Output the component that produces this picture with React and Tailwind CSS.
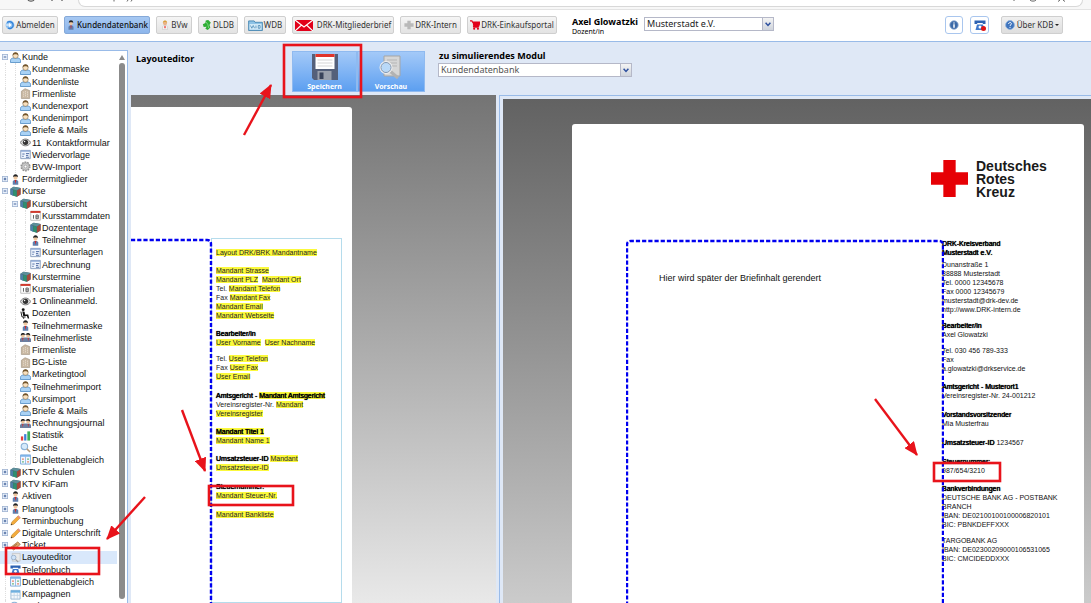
import React, { useState } from 'react';
import clsx from 'clsx';

const NAV_BUTTONS = [
  { key: 'logout', icon: 'power', label: 'Abmelden', width: 'w-[56px]' },
  { key: 'kdb', icon: 'person', label: 'Kundendatenbank', width: 'w-[86px]', active: true },
  { key: 'bvw', icon: 'nurse', label: 'BVw', width: 'w-[36px]' },
  { key: 'dldb', icon: 'leaf', label: 'DLDB', width: 'w-[40px]' },
  { key: 'wdb', icon: 'folder', label: 'WDB', width: 'w-[42px]' },
  { key: 'brief', icon: 'mail', label: 'DRK-Mitgliederbrief', width: 'w-[102px]', gap: 'gap-1' },
  { key: 'intern', icon: 'plus', label: 'DRK-Intern', width: 'w-[61px]' },
  { key: 'shop', icon: 'cart', label: 'DRK-Einkaufsportal', width: 'w-[90px]' },
];

// depth = indent level, open: true = minus box, false = plus box, undefined = leaf
const TREE = [
  { depth: 0, icon: 'user', label: 'Kunde', open: true },
  { depth: 1, icon: 'user', label: 'Kundenmaske' },
  { depth: 1, icon: 'user', label: 'Kundenliste' },
  { depth: 1, icon: 'building', label: 'Firmenliste' },
  { depth: 1, icon: 'user', label: 'Kundenexport' },
  { depth: 1, icon: 'user', label: 'Kundenimport' },
  { depth: 1, icon: 'user', label: 'Briefe & Mails' },
  { depth: 1, icon: 'eye', label: '11  Kontaktformular' },
  { depth: 1, icon: 'form', label: 'Wiedervorlage' },
  { depth: 1, icon: 'gear', label: 'BVW-Import' },
  { depth: 0, icon: 'person', label: 'Fördermitglieder', open: false },
  { depth: 0, icon: 'cube', label: 'Kurse', open: true },
  { depth: 1, icon: 'cube', label: 'Kursübersicht', open: true },
  { depth: 2, icon: 'calendar', label: 'Kursstammdaten' },
  { depth: 2, icon: 'cube', label: 'Dozententage' },
  { depth: 2, icon: 'person', label: 'Teilnehmer' },
  { depth: 2, icon: 'form', label: 'Kursunterlagen' },
  { depth: 2, icon: 'form', label: 'Abrechnung' },
  { depth: 1, icon: 'cube', label: 'Kurstermine' },
  { depth: 1, icon: 'calendar', label: 'Kursmaterialien' },
  { depth: 1, icon: 'eye', label: '1 Onlineanmeld.' },
  { depth: 1, icon: 'teacher', label: 'Dozenten' },
  { depth: 1, icon: 'person', label: 'Teilnehmermaske' },
  { depth: 1, icon: 'people', label: 'Teilnehmerliste' },
  { depth: 1, icon: 'building', label: 'Firmenliste' },
  { depth: 1, icon: 'building', label: 'BG-Liste' },
  { depth: 1, icon: 'user', label: 'Marketingtool' },
  { depth: 1, icon: 'user', label: 'Teilnehmerimport' },
  { depth: 1, icon: 'user', label: 'Kursimport' },
  { depth: 1, icon: 'user', label: 'Briefe & Mails' },
  { depth: 1, icon: 'people', label: 'Rechnungsjournal' },
  { depth: 1, icon: 'chart', label: 'Statistik' },
  { depth: 1, icon: 'search', label: 'Suche' },
  { depth: 1, icon: 'compare', label: 'Dublettenabgleich' },
  { depth: 0, icon: 'cube', label: 'KTV Schulen', open: false },
  { depth: 0, icon: 'cube', label: 'KTV KiFam', open: false },
  { depth: 0, icon: 'person', label: 'Aktiven', open: false },
  { depth: 0, icon: 'person', label: 'Planungtools', open: false },
  { depth: 0, icon: 'pencil', label: 'Terminbuchung', open: false },
  { depth: 0, icon: 'pencil', label: 'Digitale Unterschrift', open: false },
  { depth: 0, icon: 'ticket', label: 'Ticket', open: false },
  { depth: 0, icon: 'layout', label: 'Layouteditor' },
  { depth: 0, icon: 'phone', label: 'Telefonbuch' },
  { depth: 0, icon: 'compare', label: 'Dublettenabgleich' },
  { depth: 0, icon: 'window', label: 'Kampagnen' },
  { depth: 0, icon: 'search', label: 'Suche' },
];

// all glyphs share a 12x12 grid
const GLYPHS = {
  user: (
    <>
      <path d="M.5 11.500V9.200c0-1.600 1.600-2.600 3-2.600h5c1.400 0 3 1 3 2.600v2.300z" fill="#a9d2f5" stroke="#4f8ac4" strokeWidth=".9" />
      <circle cx="6" cy="4" r="2.900" fill="#f9e0bd" stroke="#77664a" strokeWidth=".6" />
      <path d="M2.900 4C2.800 1.500 4.300.4 6 .4S9.200 1.500 9.100 4C8.200 2.600 7 2.500 6 2.500S3.800 2.600 2.900 4z" fill="#73552c" />
    </>
  ),
  person: (
    <>
      <path d="M3 11.800V8l1.500-1.500h3L9 8v3.800z" fill="#5f7fae" />
      <path d="M5.200 6.500h1.600L6 11z" fill="#d22" />
      <circle cx="6" cy="4" r="2.200" fill="#f0c8a0" />
      <path d="M3.400 3.600C3.400 1 4.500.2 6 .2s2.700.8 2.700 3.400L7.500 2.800h-3z" fill="#222" />
    </>
  ),
  people: (
    <>
      <path d="M0 11V7.500L1.500 6h9L12 7.500V11z" fill="#6d7fa0" />
      <path d="M2.500 6.500h1.200L3 10zM8.400 6.500h1.200L9 10z" fill="#d22" />
      <circle cx="3.200" cy="4.200" r="2" fill="#edc49c" />
      <circle cx="8.800" cy="4.200" r="2" fill="#edc49c" />
      <path d="M.8 4C.8 1.500 2 1 3.200 1s2.300.5 2.800 2C6.500 1.500 7.600 1 8.800 1s2.400.5 2.400 3L9.500 3h-7z" fill="#222" />
    </>
  ),
  building: (
    <>
      <path d="M1.500 11.500V3.500L5.500.8l5 2v8.700z" fill="#c9b8a2" stroke="#a39483" strokeWidth=".7" />
      <path d="M4 4v6M6 3.500V10M8.200 4v6" stroke="#efe6da" strokeWidth=".9" strokeDasharray="1.200 1" />
    </>
  ),
  eye: (
    <>
      <path d="M.3 6C2 3.200 4 2.200 6 2.200S10 3.200 11.700 6C10 8.800 8 9.600 6 9.600S2 8.800.3 6z" fill="#ddd" stroke="#666" strokeWidth=".9" />
      <circle cx="6" cy="5.800" r="2.900" fill="#333" />
      <circle cx="5" cy="4.800" r=".8" fill="#fff" />
    </>
  ),
  form: (
    <>
      <path d="M.8 1.500h10.400v9H.8z" fill="#eef4fd" stroke="#7b92b5" strokeWidth=".9" />
      <path d="M.8 1.500h10.400v1.500H.8z" fill="#8fabd6" />
      <path d="M2.500 5.500h2.500M2.500 8h1.500M6.500 5h3.500M6.500 7h2.500M6.500 9h3.500" stroke="#4766a0" strokeWidth="1" />
    </>
  ),
  gear: (
    <>
      <circle cx="6" cy="6" r="4.800" fill="#c9c9c9" stroke="#8d8d8d" strokeWidth="1.400" strokeDasharray="1.800 1.200" />
      <circle cx="6" cy="6" r="3.800" fill="#ccc" stroke="#999" strokeWidth=".6" />
      <circle cx="6" cy="6" r="1.500" fill="#fff" stroke="#888" strokeWidth=".6" />
    </>
  ),
  cube: (
    <>
      <path d="M.5 3 4 .8l7.500 1.400v7L7.500 11.600.5 9.400z" fill="#456" />
      <path d="M.5 3l3 1v7L.5 9.400z" fill="#4d7fa8" />
      <path d="M3.500 4l4 1v6.600l-4-1z" fill="#2f8f70" />
      <path d="M7.500 5l4-2.800v7l-4 2.400z" fill="#a5483c" />
      <path d="M.5 3 4 .8l7.500 1.400-4 2.800z" fill="#5c8f9a" />
    </>
  ),
  calendar: (
    <>
      <path d="M.8 1.500h10.400v9.700H.8z" fill="#fff" stroke="#aaa" strokeWidth=".8" />
      <path d="M.5 1h11v2.200H.5z" fill="#cf3a2d" />
      <path d="M3.800 5.500v4M6.500 5.500h2.500v4H6.500zM6.500 7.500h2.500" fill="none" stroke="#555" strokeWidth="1" />
    </>
  ),
  teacher: (
    <>
      <circle cx="3.500" cy="1.800" r="1.600" fill="#111" />
      <path d="M2.500 3.500l2.500.5.500 3h3.500l1 4.500H8.500L7.500 8.800H3.500z" fill="#111" />
      <path d="M1 4l1.200 5.800h4M4 10v1.800" fill="none" stroke="#111" strokeWidth="1" />
    </>
  ),
  chart: (
    <>
      <path d="M1 7h2.500v4.500H1z" fill="#e33f3f" />
      <path d="M4.500 4.500H7v7H4.500z" fill="#3f7fd9" />
      <path d="M8 1.500h3v10H8z" fill="#3cae5c" />
    </>
  ),
  search: (
    <>
      <circle cx="4.800" cy="4.800" r="3.500" fill="#d6ebfb" stroke="#8db4d8" strokeWidth="1.200" />
      <path d="M7.500 7.500l3.500 3.500" stroke="#b59a78" strokeWidth="1.600" />
    </>
  ),
  compare: (
    <>
      <path d="M.6 1h10.800v10H.6z" fill="#f3f8ff" stroke="#6da1d6" strokeWidth=".9" />
      <path d="M.6 1h10.800v2H.6z" fill="#7db3e8" />
      <path d="M6 3v8" stroke="#6da1d6" strokeWidth=".7" />
      <path d="M2.500 5.500H4M8 8.500h1.500" stroke="#e0572b" strokeWidth="1.400" />
      <path d="M2.500 8.500H4M8 5.500h1.500" stroke="#3d9d4a" strokeWidth="1.400" />
    </>
  ),
  pencil: (
    <>
      <path d="M1 11l1-3.500L9 .8 11.300 3l-7 7z" fill="#f3ab3c" stroke="#b67818" strokeWidth=".5" />
      <path d="M8 1.800L9.200.7l2.200 2.200-1.200 1.200z" fill="#e88b8b" />
      <path d="M1 11l.5-1.800 1.300 1.300z" fill="#333" />
    </>
  ),
  ticket: (
    <>
      <path d="M.8 8L8.500 2l2.800 2.800L4 11z" fill="#d9a46b" stroke="#9a6a38" strokeWidth=".7" />
      <path d="M3.500 7.500l4-3" stroke="#8a5b2c" strokeWidth=".8" />
    </>
  ),
  layout: (
    <>
      <path d="M2.500 1.500h8.500v8.500H2.500z" fill="#e9e9e9" stroke="#bbb" strokeWidth=".7" />
      <circle cx="4" cy="6" r="2.500" fill="#cfe3f8" stroke="#8aa5c4" strokeWidth=".8" />
      <path d="M6 8l3 3" stroke="#999" strokeWidth="1.200" />
    </>
  ),
  phone: (
    <>
      <path d="M.5 1.500h11v3.500H8.800V4H3.200v1H.5z" fill="#2d62b3" />
      <path d="M3 5.500h6l1.500 5.500h-9z" fill="#3f78cc" />
      <circle cx="6" cy="8" r="1.500" fill="#fff" />
    </>
  ),
  window: (
    <>
      <path d="M1 1.500h10v9.500H1z" fill="#f4f8fc" stroke="#8fb0cf" strokeWidth=".9" />
      <path d="M1 1.500h10V4H1z" fill="#6fb0df" />
      <path d="M1 7h10M4.500 4v7M8 4v7" stroke="#bcd0e2" strokeWidth=".8" />
    </>
  ),
  power: (
    <>
      <circle cx="6" cy="6" r="5.300" fill="#8cc0f2" />
      <path d="M2.500 3C5 .8 9.800 2 9.800 6S6 11 3.500 9.500" fill="none" stroke="#2f7fd6" strokeWidth="1.500" />
      <path d="M1.500 6h5M4.800 4l2.200 2-2.200 2" fill="none" stroke="#fff" strokeWidth="1.300" />
    </>
  ),
  nurse: (
    <>
      <path d="M3 11.500V8l1.500-1.500h3L9 8v3.500z" fill="#f2f2f2" stroke="#bbb" strokeWidth=".5" />
      <circle cx="6" cy="4" r="2.400" fill="#e9b487" />
      <path d="M3.400 3.500C3.400 1 5 .5 6 .5s2.600.5 2.600 3L7 2.500H5z" fill="#d9a03c" />
      <path d="M6 7v3M4.800 8.500h2.400" stroke="#e33" strokeWidth=".9" />
    </>
  ),
  leaf: (
    <>
      <path d="M4.500.5L7.500 0 10.500 3 9 6l1 3-3 3-3-1.500L5.500 8 2 8.500 1 5l3-1.500z" fill="#2fae35" />
      <path d="M5 2.500l2 3 1 4" stroke="#8be08d" strokeWidth="1" fill="none" />
    </>
  ),
  plus: <path d="M4 1h4v3h3.500v4H8v3.200H4V8H.5V4H4z" fill="#b9b9b9" />,
  cart: (
    <>
      <path d="M0 1h2.300l.7 1.500h9L10.500 7.500H4.200l.3 1H10.500" fill="none" stroke="#e2001a" strokeWidth="1.300" />
      <path d="M3 2.500h9L10.500 7.500H4z" fill="#e2001a" />
      <circle cx="5" cy="10.500" r="1.300" fill="#e2001a" />
      <circle cx="9.500" cy="10.500" r="1.300" fill="#e2001a" />
    </>
  ),
  help: (
    <>
      <circle cx="6" cy="6" r="5.300" fill="#3f74bd" stroke="#8fb3e0" strokeWidth="1" />
      <path d="M4.300 4.800c0-2.300 3.400-2.300 3.400-.3 0 1.300-1.700 1.300-1.700 2.600M6 8.300v1.200" fill="none" stroke="#fff" strokeWidth="1.200" />
    </>
  ),
  info: (
    <>
      <circle cx="6" cy="6" r="5" fill="#3c6aa8" stroke="#87a5cf" strokeWidth="1" />
      <path d="M6 3v1.300M6 5.200v4" stroke="#fff" strokeWidth="1.800" />
    </>
  ),
};

function Glyph({ name, className = 'w-[10px] h-[10px]' }) {
  if (name === 'mail') {
    return (
      <svg viewBox="0 0 18 11" className="w-[18px] h-[11px] shrink-0">
        <path d="M0 0h18v11H0z" fill="#e2001a" />
        <path d="M0 0l9 7 9-7M0 11l6.500-6M18 11l-6.500-6" fill="none" stroke="#fff" strokeWidth="1.200" />
      </svg>
    );
  }
  if (name === 'folder') {
    return (
      <svg viewBox="0 0 16 12" className="w-[15px] h-[11px] shrink-0">
        <path d="M.5 1h6l1 1.500h8v9H.5z" fill="#8fc3e6" stroke="#3c7fae" strokeWidth=".9" />
        <path d="M1.500 4.500h13v6h-13z" fill="#d8edf9" />
        <path d="M2.500 6l1.500 3 1.500-3 1.500 3M8.500 6v3M11 6h2v3h-2z" fill="none" stroke="#3c7fae" strokeWidth=".8" />
      </svg>
    );
  }
  return (
    <svg viewBox="0 0 12 12" className={clsx('shrink-0', className)}>
      {GLYPHS[name]}
    </svg>
  );
}

function BrowserEdge() {
  return (
    <div className="h-[10px] shrink-0 bg-[#f7f7f7] border-b border-[#e3e3e3] flex items-start pl-[24px] pr-[8px]">
      <svg viewBox="0 0 54 4" className="w-[54px] h-[4px] shrink-0">
        <path d="M4 0c1 1.500 5 1.500 6 0M28 0v1M38 0v1" fill="none" stroke="#555" strokeWidth="1.200" />
      </svg>
      <div className="flex-1 h-[7px] bg-white border-b border-x border-[#d8d8d8] rounded-b-[7px] flex justify-between items-start pl-8 pr-3">
        <svg viewBox="0 0 30 3" className="w-[30px] h-[3px]">
          <path d="M3 0v1.500M16 1.500l1-1.500M20 1.500l1-1.500" stroke="#666" />
        </svg>
        <svg viewBox="0 0 60 3" className="w-[60px] h-[3px]">
          <path d="M4 0v1M20 0c1 1.500 5 1.500 6 0M48 1.500L50 0M53 0l2 1.500" fill="none" stroke="#666" />
        </svg>
      </div>
    </div>
  );
}

function Combo({ id, label, options, className }) {
  return (
    <div className={clsx('flex h-[14px] border border-[#b5b8c8] bg-white', className)}>
      <select
        id={id}
        aria-label={label}
        className="flex-1 min-w-0 appearance-none bg-transparent pl-[2px] outline-none leading-[12px]"
      >
        {options.map((o) => (
          <option key={o}>{o}</option>
        ))}
      </select>
      <span className="w-[11px] border-l border-[#b5b8c8] bg-gradient-to-b from-[#f4f4f4] to-[#cfd4dc] flex items-center justify-center pointer-events-none">
        <svg viewBox="0 0 6 5" className="w-[6px] h-[5px]">
          <path d="M.6.8L3 3.400 5.400.8" fill="none" stroke="#2c4f9e" strokeWidth="1.500" />
        </svg>
      </span>
    </div>
  );
}

function TopBar() {
  return (
    <header className="h-[31px] shrink-0 bg-white flex items-start pt-[6px] pl-[2px] pr-[28px] font-['Noto_Sans','Open_Sans',sans-serif] text-[8px] leading-[10px] text-[#333]">
      <nav className="flex gap-[6px]">
        {NAV_BUTTONS.map((b) => (
          <button
            key={b.key}
            className={clsx(
              'h-[18px] border rounded-[2px] flex items-center justify-center whitespace-nowrap',
              b.width,
              b.gap || 'gap-px',
              b.active
                ? 'bg-gradient-to-b from-[#a6c8f2] to-[#8db6ec] border-[#86a9d8] text-[#111] font-medium'
                : 'bg-gradient-to-b from-[#f5f5f5] to-[#e3e3e3] border-[#cfcfcf]'
            )}
          >
            <Glyph name={b.icon} />
            {b.label}
          </button>
        ))}
      </nav>
      <div className="ml-[15px] w-[72px] text-black">
        <div className="text-[9px] leading-[12px] font-bold whitespace-nowrap">Axel Glowatzki</div>
        <div className="text-[7px] leading-[8px]">Dozent/in</div>
      </div>
      <Combo
        id="mandant"
        label="Mandant"
        options={['Musterstadt e.V.']}
        className="mt-px w-[130px] text-[9px] text-[#222]"
      />
      <div className="ml-auto flex">
        <button aria-label="Info" className="w-[18px] h-[18px] border border-[#a9c6ee] rounded-[3px] flex items-center justify-center">
          <Glyph name="info" />
        </button>
        <button aria-label="Telefon" className="relative ml-[7px] w-[19px] h-[18px] border border-[#a9c6ee] rounded-[3px] flex items-center justify-center">
          <Glyph name="phone" className="w-[12px] h-[12px]" />
          <span className="absolute right-[2px] bottom-[2px] size-[5px] rounded-full bg-[#e01515]" />
        </button>
        <button className="ml-[12px] w-[62px] h-[18px] border border-[#cfcfcf] rounded-[2px] bg-gradient-to-b from-[#f0f0f0] to-[#dedede] flex items-center justify-center gap-[2px] whitespace-nowrap">
          <Glyph name="help" />
          Über KDB
          <span className="border-x-2 border-t-2 border-x-transparent border-t-[#222]" />
        </button>
      </div>
    </header>
  );
}

function TreeRow({ item, selected, onSelect }) {
  return (
    <li className={clsx('flex-1 min-h-[12px] flex', selected && 'bg-[#d9e8fb]')}>
      {Array.from({ length: item.depth }, (_, i) => (
        <span key={i} className="w-[10px] shrink-0 flex justify-center">
          <span className="border-l border-dotted border-[#dedede]" />
        </span>
      ))}
      <span className="w-[10px] shrink-0 flex items-center justify-center">
        {item.open === undefined ? (
          <span className="self-stretch w-px border-l border-dotted border-[#dedede]" />
        ) : (
          <svg viewBox="0 0 7 7" className="w-[6px] h-[6px]">
            <rect x=".5" y=".5" width="6" height="6" fill="#e8f0fb" stroke="#a3b6d3" />
            <path d={item.open ? 'M2 3.500h3' : 'M2 3.500h3M3.500 2v3'} stroke="#2c4f8e" />
          </svg>
        )}
      </span>
      <button onClick={onSelect} className="flex items-center gap-px text-left whitespace-pre">
        <Glyph name={item.icon} className="w-[11px] h-[11px]" />
        {item.label}
      </button>
    </li>
  );
}

function Sidebar() {
  const [selected, setSelected] = useState('Layouteditor');

  return (
    <aside className="w-[128px] shrink-0 mt-[8px] bg-white border-t border-r border-[#99bbe8] flex overflow-hidden">
      <ul className="flex-1 min-w-0 max-h-[562px] -mb-[9px] flex flex-col font-['Liberation_Sans',Arial,sans-serif] text-[9px] leading-[12px] text-[#111]">
        {TREE.map((item, i) => (
          <TreeRow
            key={i}
            item={item}
            selected={item.label === selected}
            onSelect={() => setSelected(item.label)}
          />
        ))}
      </ul>
      <div className="w-[10px] shrink-0 flex flex-col items-center pt-[4px] pb-[4px] gap-[3px]">
        <span className="border-x-[3px] border-b-[5px] border-x-transparent border-b-[#8b8b8b]" />
        <span className="w-[6px] flex-1 rounded-full bg-[#8b8b8b]" />
      </div>
    </aside>
  );
}

function EditorHeader() {
  return (
    <div className="h-[53px] shrink-0 flex items-start font-['Noto_Sans','Open_Sans',sans-serif]">
      <h1 className="w-[161px] pl-[5px] pt-[11px] text-[9px] leading-[12px] font-bold text-black">Layouteditor</h1>
      <button className="mt-[9px] w-[65px] h-[41px] bg-gradient-to-b from-[#a3c9f8] to-[#5c9ff0] border border-[#8fbaf0] flex flex-col items-center justify-between text-[7px] leading-[9px] font-bold text-white">
        <svg viewBox="0 0 26 27" className="w-[26px] h-[27px] mt-px">
          <path d="M0 1h26v26H2L0 25z" fill="#54607a" />
          <path d="M3.500 1h19v15h-19z" fill="#fff" />
          <path d="M3.500 1h19v3h-19z" fill="#e0342b" />
          <path d="M5.500 7h15M5.500 10h15M5.500 13h15" stroke="#d5d5d5" />
          <path d="M5.500 18h14v9h-14z" fill="#9aa0ac" />
          <path d="M7.500 19.500h4V26h-4z" fill="#39435a" />
        </svg>
        Speichern
      </button>
      <button className="mt-[9px] w-[68px] h-[41px] bg-gradient-to-b from-[#a3c9f8] to-[#5c9ff0] border border-[#8fbaf0] flex flex-col items-center justify-between text-[7px] leading-[9px] font-bold text-white">
        <svg viewBox="0 0 26 27" className="w-[26px] h-[27px] mt-px">
          <path d="M6 3h16v20H6z" fill="#d6d6d6" stroke="#a5a5a5" />
          <path d="M9 7h10M9 10h10M13 13h6" stroke="#b5b5b5" />
          <path d="M12 18l8 7" stroke="#b2b2b2" strokeWidth="3" />
          <circle cx="8" cy="14.500" r="5.500" fill="#b9d9f8" stroke="#f0f0f0" strokeWidth="2" />
          <circle cx="8" cy="14.500" r="5" fill="none" stroke="#7c94b2" />
        </svg>
        Vorschau
      </button>
      <div className="ml-[13px] pt-[8px]">
        <label htmlFor="modul" className="block pl-px text-[9px] leading-[12px] font-bold text-black">
          zu simulierendes Modul
        </label>
        <Combo
          id="modul"
          options={['Kundendatenbank']}
          className="w-[194px] mt-px text-[9px] text-[#555]"
        />
      </div>
    </div>
  );
}

function Mark({ children }) {
  return <span className="bg-[#fbf93c]">{children}</span>;
}

// headings in the letter column keep the width of the regular face
function Strong({ children }) {
  return <strong className="font-normal text-black [text-shadow:0_0_1px_#000,0_0_0_#000]">{children}</strong>;
}

function TemplatePage() {
  return (
    <section className="w-[365px] shrink-0 bg-gradient-to-b from-[#747474] to-[#e9e9e9] pt-[12px] overflow-hidden">
      <div className="relative h-full w-[221px] bg-white rounded-tr-[3px] pt-[131px] flex">
        <div className="w-[80px] shrink-0" />
        <div className="w-[131px] border border-[#b5dcec] pl-[4px] pt-[9px] font-['Liberation_Sans',Arial,sans-serif] text-[7px] leading-[9px] text-[#222] whitespace-nowrap">
          <p><Mark>Layout DRK/BRK Mandantname</Mark></p>
          <p className="mt-[9px]"><Mark>Mandant Strasse</Mark></p>
          <p><Mark>Mandant PLZ</Mark>&nbsp; <Mark>Mandant Ort</Mark></p>
          <p>Tel. <Mark>Mandant Telefon</Mark></p>
          <p>Fax <Mark>Mandant Fax</Mark></p>
          <p><Mark>Mandant Email</Mark></p>
          <p><Mark>Mandant Webseite</Mark></p>
          <p className="mt-[9px]"><Strong>Bearbeiter/in</Strong></p>
          <p><Mark>User Vorname</Mark>&nbsp; <Mark>User Nachname</Mark></p>
          <p className="mt-[7px]">Tel. <Mark>User Telefon</Mark></p>
          <p>Fax <Mark>User Fax</Mark></p>
          <p><Mark>User Email</Mark></p>
          <p className="mt-[10px]"><Strong>Amtsgericht - <Mark>Mandant Amtsgericht</Mark></Strong></p>
          <p>Vereinsregister-Nr. <Mark>Mandant</Mark></p>
          <p><Mark>Vereinsregister</Mark></p>
          <p className="mt-[9px]"><Strong><Mark>Mandant Titel 1</Mark></Strong></p>
          <p><Mark>Mandant Name 1</Mark></p>
          <p className="mt-[9px]"><Strong>Umsatzsteuer-ID</Strong> <Mark>Mandant</Mark></p>
          <p><Mark>Umsatzsteuer-ID</Mark></p>
          <p className="mt-[10px]"><Strong>Steuernummer:</Strong></p>
          <p><Mark>Mandant Steuer-Nr.</Mark></p>
          <p className="mt-[10px]"><Mark>Mandant Bankliste</Mark></p>
        </div>
        <svg className="absolute left-0 top-[131px] w-[82px] h-full pointer-events-none">
          <path d="M0 2h76q4 0 4 4v900" fill="none" stroke="#0000f0" strokeWidth="2.400" strokeDasharray="4.200 2" />
        </svg>
      </div>
    </section>
  );
}

function PreviewPage() {
  return (
    <section className="flex-1 min-w-0 ml-[3px] border-t border-l border-[#99bbe8] pt-[3px] pl-[3px] flex">
      <div className="flex-1 min-w-0 bg-gradient-to-b from-[#626262] to-[#cbcbcb] pt-[25px] pl-[69px] pr-[7px] overflow-hidden">
        <div className="relative h-full bg-white rounded-t-[3px] pt-[36px]">
          <div className="flex items-start justify-end gap-[8px] pr-[36px]">
            <svg viewBox="0 0 36 36" className="w-[37px] h-[37px]">
              <path d="M12 0h12v12h12v12H24v12H12V24H0V12h12z" fill="#e60005" />
            </svg>
            <div className="w-[72px] font-['Liberation_Sans',Arial,sans-serif] font-bold text-[14px] leading-[13px] text-[#1a1a1a]">
              Deutsches Rotes Kreuz
            </div>
          </div>
          <div className="mt-[40px] flex justify-between pl-[87px] font-['Liberation_Sans',Arial,sans-serif] text-[#111]">
            <p className="mt-[33px] text-[9px] leading-[12px] whitespace-nowrap">Hier wird später der Briefinhalt gerendert</p>
            <div className="w-[142px] shrink-0 text-[7px] leading-[9px] whitespace-nowrap">
              <p><Strong>DRK-Kreisverband</Strong></p>
              <p><Strong>Musterstadt e.V.</Strong></p>
              <p className="mt-[3px]">Dunanstraße 1</p>
              <p>88888 Musterstadt</p>
              <p>Tel. 0000 12345678</p>
              <p>Fax 0000 12345679</p>
              <p>musterstadt@drk-dev.de</p>
              <p>http://www.DRK-intern.de</p>
              <p className="mt-[7px]"><Strong>Bearbeiter/in</Strong></p>
              <p>Axel Glowatzki</p>
              <p className="mt-[7px]">Tel. 030 456 789-333</p>
              <p>Fax</p>
              <p>a.glowatzki@drkservice.de</p>
              <p className="mt-[9px]"><Strong>Amtsgericht - Musterort1</Strong></p>
              <p>Vereinsregister-Nr. 24-001212</p>
              <p className="mt-[10px]"><Strong>Vorstandsvorsitzender</Strong></p>
              <p>Mia Musterfrau</p>
              <p className="mt-[10px]"><Strong>Umsatzsteuer-ID</Strong> 1234567</p>
              <p className="mt-[10px]"><Strong>Steuernummer:</Strong></p>
              <p>987/654/3210</p>
              <p className="mt-[9px]"><Strong>Bankverbindungen</Strong></p>
              <p>DEUTSCHE BANK AG - POSTBANK</p>
              <p>BRANCH</p>
              <p>IBAN: DE02100100100006820101</p>
              <p>BIC: PBNKDEFFXXX</p>
              <p className="mt-[7px]">TARGOBANK AG</p>
              <p>IBAN: DE02300209000106531065</p>
              <p>BIC: CMCIDEDDXXX</p>
            </div>
          </div>
          <svg className="absolute right-[140px] top-[115px] w-[318px] h-full pointer-events-none">
            <path d="M1 900V6q0-4 4-4h308q4 0 4 4v900" fill="none" stroke="#0000f0" strokeWidth="2.400" strokeDasharray="4.200 2" />
          </svg>
        </div>
      </div>
    </section>
  );
}

const ARROWS = [
  [244, 135, 271, 85],
  [182, 410, 205, 471],
  [145, 497, 107, 539],
  [875, 399, 917, 455],
];

const BOXES = [
  [284, 45, 77, 52],
  [6, 548, 93, 26],
  [209, 486, 84, 19],
  [934, 463, 66, 18],
];

// red tutorial markers on top of everything
function Annotations() {
  return (
    <svg viewBox="0 0 1091 603" className="absolute left-0 top-0 w-[1091px] h-[603px] pointer-events-none" fill="none" stroke="#e8131b">
      <defs>
        <marker id="head" viewBox="0 0 14 12" refX="13" refY="6" markerWidth="14" markerHeight="12" markerUnits="userSpaceOnUse" orient="auto">
          <path d="M0 0l14 6-14 6z" fill="#e8131b" stroke="none" />
        </marker>
      </defs>
      {BOXES.map(([x, y, w, h]) => (
        <rect key={x} x={x} y={y} width={w} height={h} strokeWidth="2.600" />
      ))}
      {ARROWS.map(([x1, y1, x2, y2]) => (
        <path key={x1} d={`M${x1} ${y1}L${x2} ${y2}`} strokeWidth="2.400" markerEnd="url(#head)" />
      ))}
    </svg>
  );
}

export default function App() {
  return (
    <div className="relative h-screen overflow-hidden flex flex-col bg-[#dfe8f6]">
      <BrowserEdge />
      <TopBar />
      <div className="flex-1 min-h-0 border-t border-[#99bbe8] flex">
        <Sidebar />
        <main className="flex-1 min-w-0 ml-[3px] flex flex-col">
          <EditorHeader />
          <div className="flex-1 min-h-0 flex">
            <TemplatePage />
            <PreviewPage />
          </div>
        </main>
      </div>
      <Annotations />
    </div>
  );
}
